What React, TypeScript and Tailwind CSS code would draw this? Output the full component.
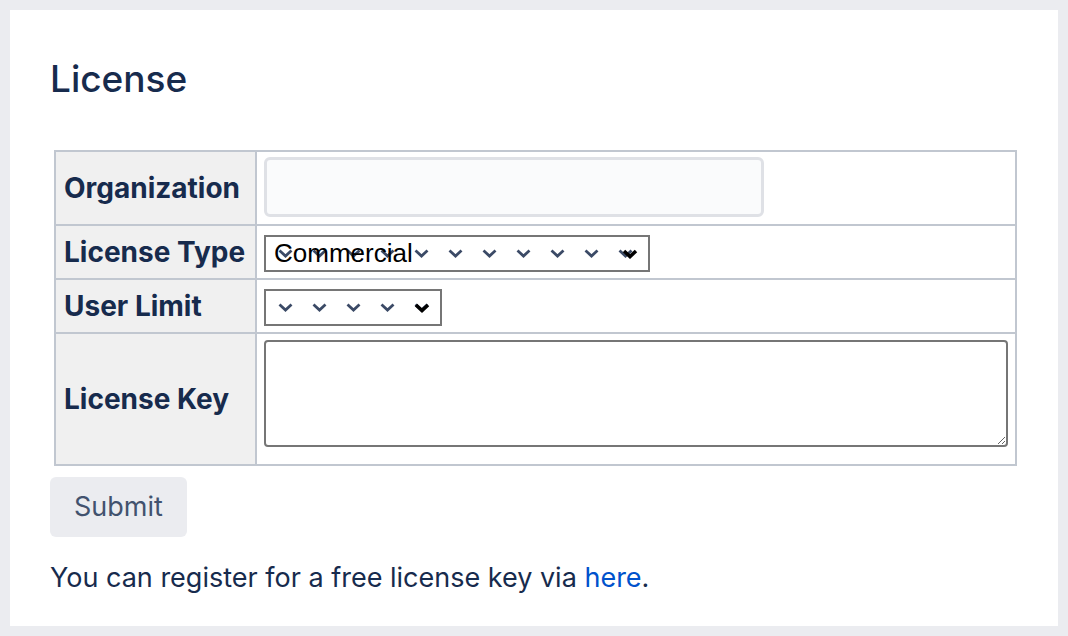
import React from "react";

const FONT = { fontFamily: "Inter, 'Noto Sans', sans-serif" };

function Chevrons({ count }: { count: number }) {
  return (
    <div className="absolute inset-[2px] flex overflow-hidden pointer-events-none">
      {Array.from({ length: count }).map((_, i) => (
        <div key={i} className="w-[34px] h-full shrink-0 flex items-center justify-center">
          <svg width="15" height="9" viewBox="0 0 15 9">
            <path d="M1.5 1.5 L7.5 7 L13.5 1.5" fill="none" stroke="#3b4a66" strokeWidth="2.8" />
          </svg>
        </div>
      ))}
    </div>
  );
}

function FakeSelect({ width, count, value }: { width: string; count: number; value?: string }) {
  return (
    <div className={`relative h-[37px] ${width} border-2 border-[#767676] bg-white`}>
      <Chevrons count={count} />
      {value && (
        <span
          className="absolute left-[8px] top-0 h-full flex items-center text-[26px] text-black"
          style={{ fontFamily: "'Liberation Sans', Arial, sans-serif" }}
        >
          {value}
        </span>
      )}
      <svg
        className="absolute right-[10px] top-1/2 -translate-y-1/2"
        width="16"
        height="10"
        viewBox="0 0 16 10"
      >
        <path d="M2 2 L8 7.5 L14 2" fill="none" stroke="#000" strokeWidth="3.6" />
      </svg>
    </div>
  );
}

const LABEL =
  "w-[201px] bg-[#f0f0f0] border-2 border-[#c1c7d0] px-[8px] align-middle text-[28px] font-bold whitespace-nowrap";

export default function App() {
  return (
    <div className="min-h-screen bg-[#ebecf0] p-[10px]" style={FONT}>
      <div className="bg-white h-[616px] pt-[46px] pl-[40px] pr-[40px] text-[#172b4d]">
        <h1 className="text-[37px] leading-[46px] font-medium">License</h1>
        <table className="mt-[48px] ml-[4px] border-collapse w-[963px]">
          <tbody>
            <tr>
              <td className={LABEL}>Organization</td>
              <td className="border-2 border-[#c1c7d0] pl-[7px] pt-[5px] pb-[7px] align-top">
                <input
                  type="text"
                  className="block w-[500px] h-[60px] rounded-[6px] border-[3px] border-[#dfe1e6] bg-[#fafbfc] outline-none"
                />
              </td>
            </tr>
            <tr>
              <td className={LABEL}>License Type</td>
              <td className="border-2 border-[#c1c7d0] pl-[7px] pt-[9px] pb-[6px] align-top">
                <FakeSelect width="w-[386px]" count={12} value="Commercial" />
              </td>
            </tr>
            <tr>
              <td className={LABEL}>User Limit</td>
              <td className="border-2 border-[#c1c7d0] pl-[7px] pt-[9px] pb-[6px] align-top">
                <FakeSelect width="w-[178px]" count={6} />
              </td>
            </tr>
            <tr>
              <td className={LABEL}>License Key</td>
              <td className="border-2 border-[#c1c7d0] px-[7px] pt-[6px] pb-[17px] align-top">
                <textarea className="block w-full h-[107px] border-2 border-[#767676] rounded-[4px] bg-white outline-none resize" />
              </td>
            </tr>
          </tbody>
        </table>
        <button className="mt-[11px] h-[60px] px-[24px] rounded-[6px] bg-[#ebecf0] text-[#42526e] text-[27px]">
          Submit
        </button>
        <p className="mt-[22px] text-[27px] leading-[38px]">
          You can register for a free license key via{" "}
          <a href="#" className="text-[#0052cc]">
            here
          </a>
          .
        </p>
      </div>
    </div>
  );
}
